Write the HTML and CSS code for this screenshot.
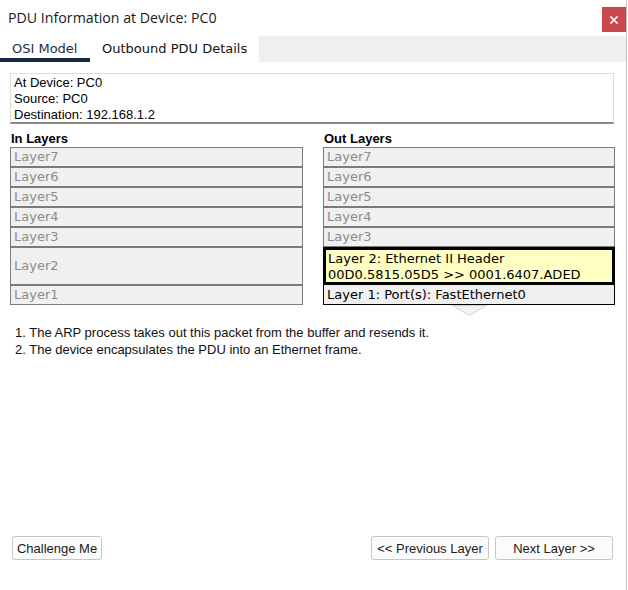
FILE: index.html
```html
<!DOCTYPE html>
<html>
<head>
<meta charset="utf-8">
<link rel="stylesheet" href="styles.css">
</head>
<body>
<div class="window">
  <div class="titlebar">
    <span class="title">PDU Information at Device: PC0</span>
    <button class="close" aria-label="Close">
      <svg width="8" height="8" viewBox="0 0 8 8"><path d="M1 1 L7 7 M7 1 L1 7" stroke="#fff" stroke-width="1.6" stroke-linecap="square"/></svg>
    </button>
  </div>
  <div class="tabs">
    <div class="tab active">OSI Model</div>
    <div class="tab">Outbound PDU Details</div>
    <div class="tab-fill"></div>
  </div>
  <div class="content">
    <div class="info">
      <div>At Device: PC0</div>
      <div>Source: PC0</div>
      <div>Destination: 192.168.1.2</div>
    </div>
    <div class="columns">
      <div class="col">
        <div class="col-label">In Layers</div>
        <div class="layer">Layer7</div>
        <div class="layer">Layer6</div>
        <div class="layer">Layer5</div>
        <div class="layer">Layer4</div>
        <div class="layer">Layer3</div>
        <div class="layer tall">Layer2</div>
        <div class="layer">Layer1</div>
      </div>
      <div class="col">
        <div class="col-label">Out Layers</div>
        <div class="layer">Layer7</div>
        <div class="layer">Layer6</div>
        <div class="layer">Layer5</div>
        <div class="layer">Layer4</div>
        <div class="layer">Layer3</div>
        <div class="layer tall selected">Layer 2: Ethernet II Header<br>00D0.5815.05D5 &gt;&gt; 0001.6407.ADED</div>
        <div class="layer current">Layer 1: Port(s): FastEthernet0</div>
        <div class="chevron">
          <svg width="35" height="12" viewBox="0 0 35 12"><polygon points="0.5,0.5 17.5,10.5 34.5,0.5" fill="#f3f3f3" stroke="#d2d2d2" stroke-width="1"/></svg>
        </div>
      </div>
    </div>
    <div class="desc">
      <div>1. The ARP process takes out this packet from the buffer and resends it.</div>
      <div>2. The device encapsulates the PDU into an Ethernet frame.</div>
    </div>
  </div>
  <div class="footer">
    <button class="btn btn-challenge">Challenge Me</button>
    <div class="nav">
      <button class="btn btn-nav">&lt;&lt; Previous Layer</button>
      <button class="btn btn-nav">Next Layer &gt;&gt;</button>
    </div>
  </div>
</div>
</body>
</html>
```

FILE: styles.css
```css
* { box-sizing: border-box; }
html, body { margin: 0; padding: 0; background: #fff; }
.window {
  width: 627px;
  height: 590px;
  border-right: 1px solid #c4c4c4;
  background: #fff;
  display: flex;
  flex-direction: column;
  font-family: "Liberation Sans", Arial, sans-serif;
  color: #000;
}
.titlebar {
  height: 36px;
  display: flex;
  align-items: flex-start;
  justify-content: space-between;
}
.title {
  font-family: "Open Sans", sans-serif;
  font-size: 14.2px;
  color: #1a1a1a;
  margin: 8px 0 0 8px;
  line-height: 20px;
}
.close {
  width: 24px;
  height: 25px;
  margin-top: 7px;
  border: none;
  padding: 0;
  background: #c9494d;
  display: flex;
  align-items: center;
  justify-content: center;
}
.tabs {
  height: 26px;
  display: flex;
  font-family: "DejaVu Sans", Verdana, sans-serif;
  font-size: 13px;
}
.tab {
  padding: 4px 12px 0;
  line-height: 18px;
  color: #111;
  background: #fff;
}
.tab.active {
  color: #1b2e48;
  border-bottom: 4px solid #14294a;
  width: 90px;
}
.tab-fill { flex: 1; background: #efefef; }
.content {
  flex: 1;
  padding: 11px 12px 0 10px;
}
.info {
  border: 1px solid #dcdcdc;
  border-bottom: 2px solid #8a8a8a;
  height: 51px;
  padding: 1px 3px;
  font-size: 13px;
  line-height: 16px;
}
.columns {
  display: grid;
  grid-template-columns: 293px 292px;
  column-gap: 20px;
  margin-top: 7px;
}
.col { display: flex; flex-direction: column; }
.col-label {
  font-weight: bold;
  font-size: 13px;
  line-height: 16px;
  padding-left: 1px;
}
.layer {
  height: 20px;
  border: 1px solid #7b7b7b;
  background: #f0f0f0;
  color: #8c8c8c;
  font-family: "DejaVu Sans", Verdana, sans-serif;
  font-size: 13px;
  line-height: 18px;
  padding-left: 3px;
}
.layer.tall {
  height: 38px;
  display: flex;
  align-items: center;
}
.layer.selected {
  display: block;
  border: 3px solid #000;
  background: #ffffc4;
  color: #000;
  line-height: 16px;
  padding: 1px 0 0 2px;
}
.layer.current {
  border: 1px solid #000;
  border-top: none;
  color: #000;
  height: 20px;
  line-height: 19px;
}
.chevron {
  display: flex;
  justify-content: center;
  height: 12px;
}
.chevron svg { display: block; }
.desc {
  margin-top: 7px;
  padding-left: 5px;
  font-size: 13px;
  line-height: 17px;
  color: #111;
}
.footer {
  height: 54px;
  display: flex;
  justify-content: space-between;
  align-items: flex-start;
  padding: 0 13px 0 12px;
}
.nav { display: flex; gap: 6px; }
.btn {
  height: 24px;
  border: 1px solid #c6c6c6;
  border-radius: 3px;
  background: #fcfcfc;
  font-family: "Liberation Sans", Arial, sans-serif;
  font-size: 13px;
  color: #1a1a1a;
  padding: 0;
}
.btn-challenge { width: 90px; }
.btn-nav { width: 118px; }
```
